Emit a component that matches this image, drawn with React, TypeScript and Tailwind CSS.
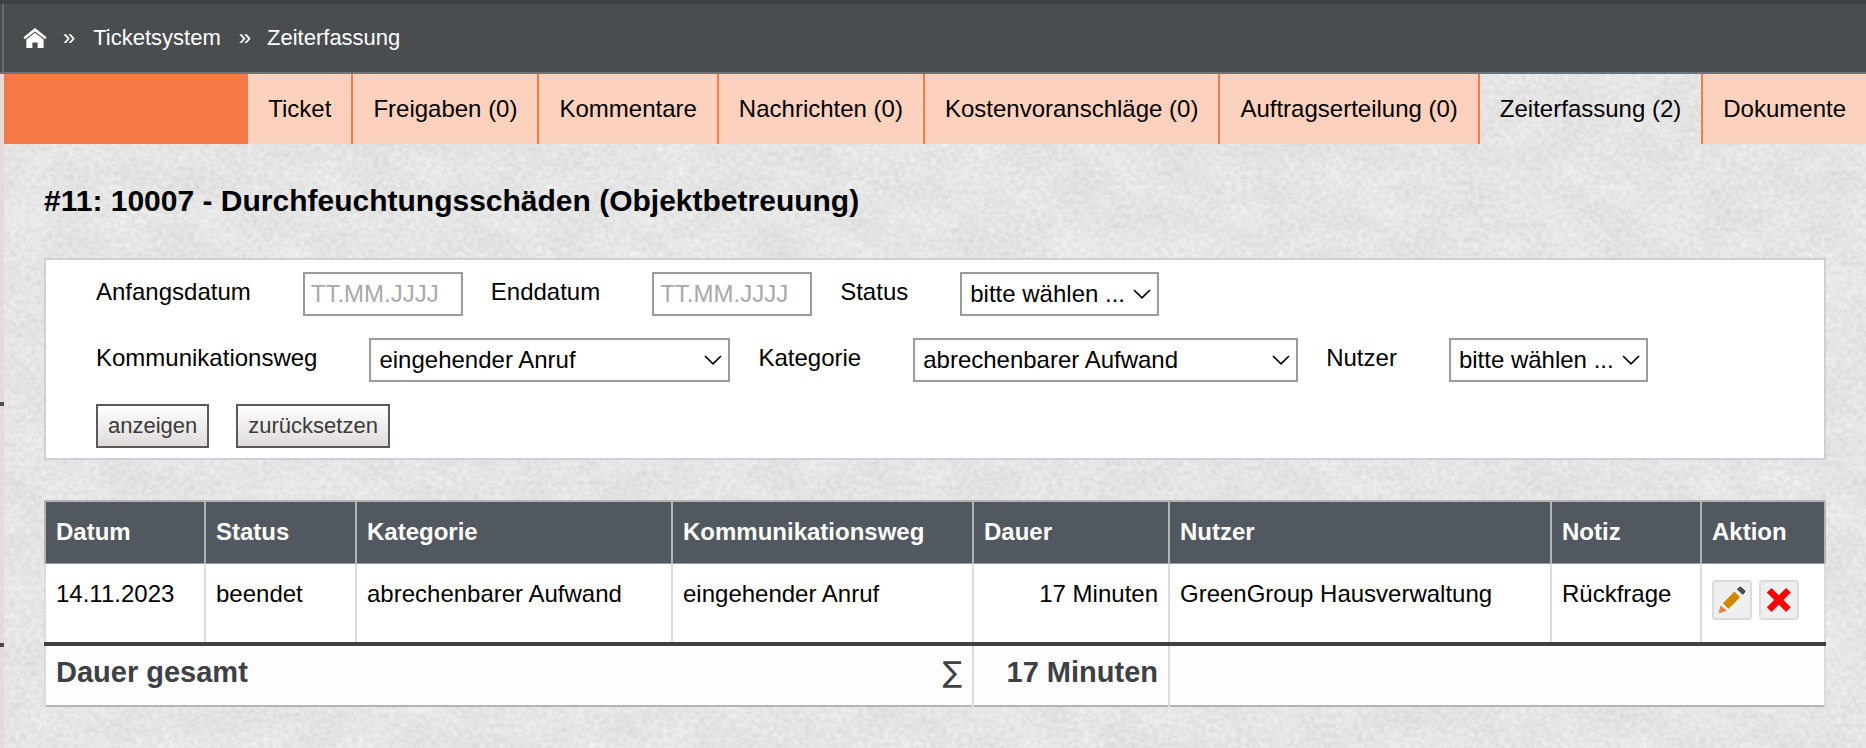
import React from "react";

const tabs = [
  { label: "Ticket" },
  { label: "Freigaben (0)" },
  { label: "Kommentare" },
  { label: "Nachrichten (0)" },
  { label: "Kostenvoranschläge (0)" },
  { label: "Auftragserteilung (0)" },
  { label: "Zeiterfassung (2)", active: true },
  { label: "Dokumente" },
];

function ConcreteBackground() {
  return (
    <svg className="absolute inset-0 -z-10 h-full w-full" aria-hidden="true">
      <filter id="concrete" x="0" y="0" width="100%" height="100%" colorInterpolationFilters="sRGB">
        <feTurbulence type="fractalNoise" baseFrequency="0.19 0.21" numOctaves="3" seed="7" result="grain" />
        <feColorMatrix
          in="grain"
          type="matrix"
          values="0.22 0 0 0 0.785  0.22 0 0 0 0.785  0.22 0 0 0 0.785  0 0 0 0 1"
          result="fine"
        />
        <feTurbulence type="fractalNoise" baseFrequency="0.02 0.03" numOctaves="4" seed="3" result="cloud" />
        <feColorMatrix
          in="cloud"
          type="matrix"
          values="0.12 0 0 0 0.84  0.12 0 0 0 0.84  0.12 0 0 0 0.84  0 0 0 0 1"
          result="coarse"
        />
        <feComposite in="fine" in2="coarse" operator="arithmetic" k1="0" k2="0.5" k3="0.5" k4="0" />
      </filter>
      <rect width="100%" height="100%" filter="url(#concrete)" />
    </svg>
  );
}

function HomeIcon() {
  return (
    <svg viewBox="0 0 24 22" className="h-[22px] w-6 fill-white" aria-hidden="true">
      <path d="M12 1 L23.6 10.2 L22.2 12.2 L12 4.4 L1.8 12.2 L0.4 10.2 Z" />
      <path d="M12 5.8 L20.6 12.4 V21 H14.6 V15.4 H9.4 V21 H3.4 V12.4 Z" />
    </svg>
  );
}

function PencilIcon() {
  return (
    <svg viewBox="0 0 40 40" className="h-10 w-10 shrink-0" aria-hidden="true">
      <g stroke="#ffffff" strokeWidth="1.6" strokeLinejoin="round" paintOrder="stroke">
        <path d="M8.4 25.4 L15.2 30.4 L6.4 33.8 Z" fill="#f57a45" />
        <path d="M22.4 11.6 L28.2 17.3 L16.4 29 L10.8 23.3 Z" fill="#d18700" />
        <path d="M24.8 9.2 L27 7 Q28.2 6 29.6 7.2 L33 10.2 Q34 11.4 33 12.6 L30.8 15 Z" fill="#4a4f52" />
      </g>
    </svg>
  );
}

function DeleteIcon() {
  return (
    <svg viewBox="0 0 40 40" className="h-10 w-10 shrink-0" aria-hidden="true">
      <path d="M10.2 10.2 L29.4 29.6 M29.4 10.2 L10.2 29.6" stroke="#ff0000" strokeWidth="6.6" />
    </svg>
  );
}

function Field({ id, label, children }: { id: string; label: string; children: React.ReactNode }) {
  return (
    <div className="flex items-start gap-[52px]">
      <label htmlFor={id} className="leading-10 whitespace-nowrap">
        {label}
      </label>
      {children}
    </div>
  );
}

function DateField({ id, label }: { id: string; label: string }) {
  return (
    <Field id={id} label={label}>
      <input
        id={id}
        type="text"
        placeholder="TT.MM.JJJJ"
        className="h-11 w-40 border-2 border-[#9b9b9b] bg-white px-1.5 outline-none placeholder:text-[#a9a9a9]"
      />
    </Field>
  );
}

function SelectField({ id, label, value, width }: { id: string; label: string; value: string; width: string }) {
  return (
    <Field id={id} label={label}>
      <span className={`relative flex ${width}`}>
        <select
          id={id}
          className="h-11 w-full appearance-none border-2 border-[#9b9b9b] bg-white px-2 text-black outline-none"
        >
          <option>{value}</option>
        </select>
        <svg
          viewBox="0 0 18 10"
          className="pointer-events-none absolute top-[17px] right-2 h-2.5 w-[18px]"
          aria-hidden="true"
        >
          <path d="M1 1 L9 8.8 L17 1" fill="none" stroke="#000000" strokeWidth="1.7" />
        </svg>
      </span>
    </Field>
  );
}

const headCell = "border-x-2 border-[#b4b4b4] px-2.5 text-left font-bold whitespace-nowrap";
const bodyCell = "border-x-2 border-[#dcdcdc] px-2.5 pt-4 align-top leading-7 whitespace-nowrap";
const footCell = "border-x-2 border-[#dcdcdc] px-2.5 pt-2.5 align-top font-bold leading-8";
const formButton =
  "h-11 border-2 border-[#5a5a5a] bg-gradient-to-b from-white to-[#dfdbdb] px-2.5 text-[22px] text-[#3a3a3a]";
const iconButton =
  "flex h-10 w-10 items-center justify-center rounded-sm border-2 border-[#dddddd] bg-[#efefef]";

export default function App() {
  return (
    <div className="relative isolate flex min-h-screen flex-col bg-[#e4e4e4] font-['Liberation_Sans',Arial,sans-serif] text-[24px] leading-7 text-black">
      <ConcreteBackground />

      <header className="border-t-4 border-b-2 border-t-[#3d4045] border-b-[#6c757d] bg-[#494d50] pl-0.5">
        <nav
          aria-label="Brotkrumen"
          className="flex h-[68px] items-center border-l-2 border-[#6a6b70] pl-[19px] text-[22px] text-white"
        >
          <a href="#start" aria-label="Startseite">
            <HomeIcon />
          </a>
          <span className="ml-4">»</span>
          <a href="#ticketsystem" className="ml-[18px]">
            Ticketsystem
          </a>
          <span className="ml-[18px]">»</span>
          <a href="#zeiterfassung" className="ml-4">
            Zeiterfassung
          </a>
        </nav>
      </header>

      <div className="flex flex-1">
        <aside className="flex w-1 shrink-0 flex-col bg-[#e8dbd7]">
          <div className="mt-[328px] h-1 bg-[#494d50]" />
          <div className="mt-[237px] h-1 bg-[#494d50]" />
        </aside>

        <div className="min-w-0 flex-1">
          <nav aria-label="Reiter" className="flex h-[70px] whitespace-nowrap">
            <div className="flex-1 bg-[#f57a45]" />
            {tabs.map((tab) => (
              <a
                key={tab.label}
                href="#reiter"
                aria-current={tab.active ? "page" : undefined}
                className={`flex items-center border-r-2 border-[#f57a45] px-5 last:border-r-0 ${
                  tab.active ? "" : "bg-[#fcd1be]"
                }`}
              >
                {tab.label}
              </a>
            ))}
          </nav>

          <main className="px-10 pb-10">
            <h1 className="pt-10 text-[30px] leading-[34px] font-bold">
              #11: 10007 - Durchfeuchtungsschäden (Objektbetreuung)
            </h1>

            <form
              onSubmit={(e) => e.preventDefault()}
              className="mt-10 flex flex-col gap-[22px] border-2 border-[#cdd1d5] bg-white pt-3 pb-2.5 pl-[50px]"
            >
              <div className="flex flex-wrap gap-x-7">
                <DateField id="anfang" label="Anfangsdatum" />
                <DateField id="ende" label="Enddatum" />
                <SelectField id="status" label="Status" value="bitte wählen ..." width="w-[199px]" />
              </div>
              <div className="flex flex-wrap gap-x-7">
                <SelectField id="weg" label="Kommunikationsweg" value="eingehender Anruf" width="w-[361px]" />
                <SelectField id="kategorie" label="Kategorie" value="abrechenbarer Aufwand" width="w-[385px]" />
                <SelectField id="nutzer" label="Nutzer" value="bitte wählen ..." width="w-[199px]" />
              </div>
              <div className="flex gap-[27px]">
                <button type="submit" className={formButton}>
                  anzeigen
                </button>
                <button type="reset" className={formButton}>
                  zurücksetzen
                </button>
              </div>
            </form>

            <table className="mt-10 w-full table-fixed border-collapse">
              <colgroup>
                <col className="w-[160px]" />
                <col className="w-[151px]" />
                <col className="w-[316px]" />
                <col className="w-[301px]" />
                <col className="w-[196px]" />
                <col className="w-[382px]" />
                <col className="w-[150px]" />
                <col className="w-[124px]" />
              </colgroup>
              <thead>
                <tr className="h-[62px] border-t-2 border-b border-t-[#b4b4b4] border-b-[#9a9da0] bg-[#525860] text-white">
                  <th className={headCell}>Datum</th>
                  <th className={headCell}>Status</th>
                  <th className={headCell}>Kategorie</th>
                  <th className={headCell}>Kommunikationsweg</th>
                  <th className={headCell}>Dauer</th>
                  <th className={headCell}>Nutzer</th>
                  <th className={headCell}>Notiz</th>
                  <th className={headCell}>Aktion</th>
                </tr>
              </thead>
              <tbody>
                <tr className="h-[81px] bg-white">
                  <td className={bodyCell}>14.11.2023</td>
                  <td className={bodyCell}>beendet</td>
                  <td className={bodyCell}>abrechenbarer Aufwand</td>
                  <td className={bodyCell}>eingehender Anruf</td>
                  <td className={`${bodyCell} text-right`}>17 Minuten</td>
                  <td className={bodyCell}>GreenGroup Hausverwaltung</td>
                  <td className={bodyCell}>Rückfrage</td>
                  <td className={bodyCell}>
                    <div className="flex gap-[7px]">
                      <button type="button" aria-label="Bearbeiten" className={iconButton}>
                        <PencilIcon />
                      </button>
                      <button type="button" aria-label="Löschen" className={iconButton}>
                        <DeleteIcon />
                      </button>
                    </div>
                  </td>
                </tr>
              </tbody>
              <tfoot>
                <tr className="h-[62px] border-t-4 border-b-2 border-t-[#3d4045] border-b-[#b4b4b4] bg-[#fdfdfd] text-[29px] text-[#3d4045]">
                  <td colSpan={4} className={footCell}>
                    <div className="flex justify-between">
                      <span>Dauer gesamt</span>
                      <span className="font-['DejaVu_Sans',sans-serif] font-normal">∑</span>
                    </div>
                  </td>
                  <td className={`${footCell} text-right`}>17 Minuten</td>
                  <td colSpan={3} className={footCell} />
                </tr>
              </tfoot>
            </table>
          </main>
        </div>
      </div>
    </div>
  );
}
